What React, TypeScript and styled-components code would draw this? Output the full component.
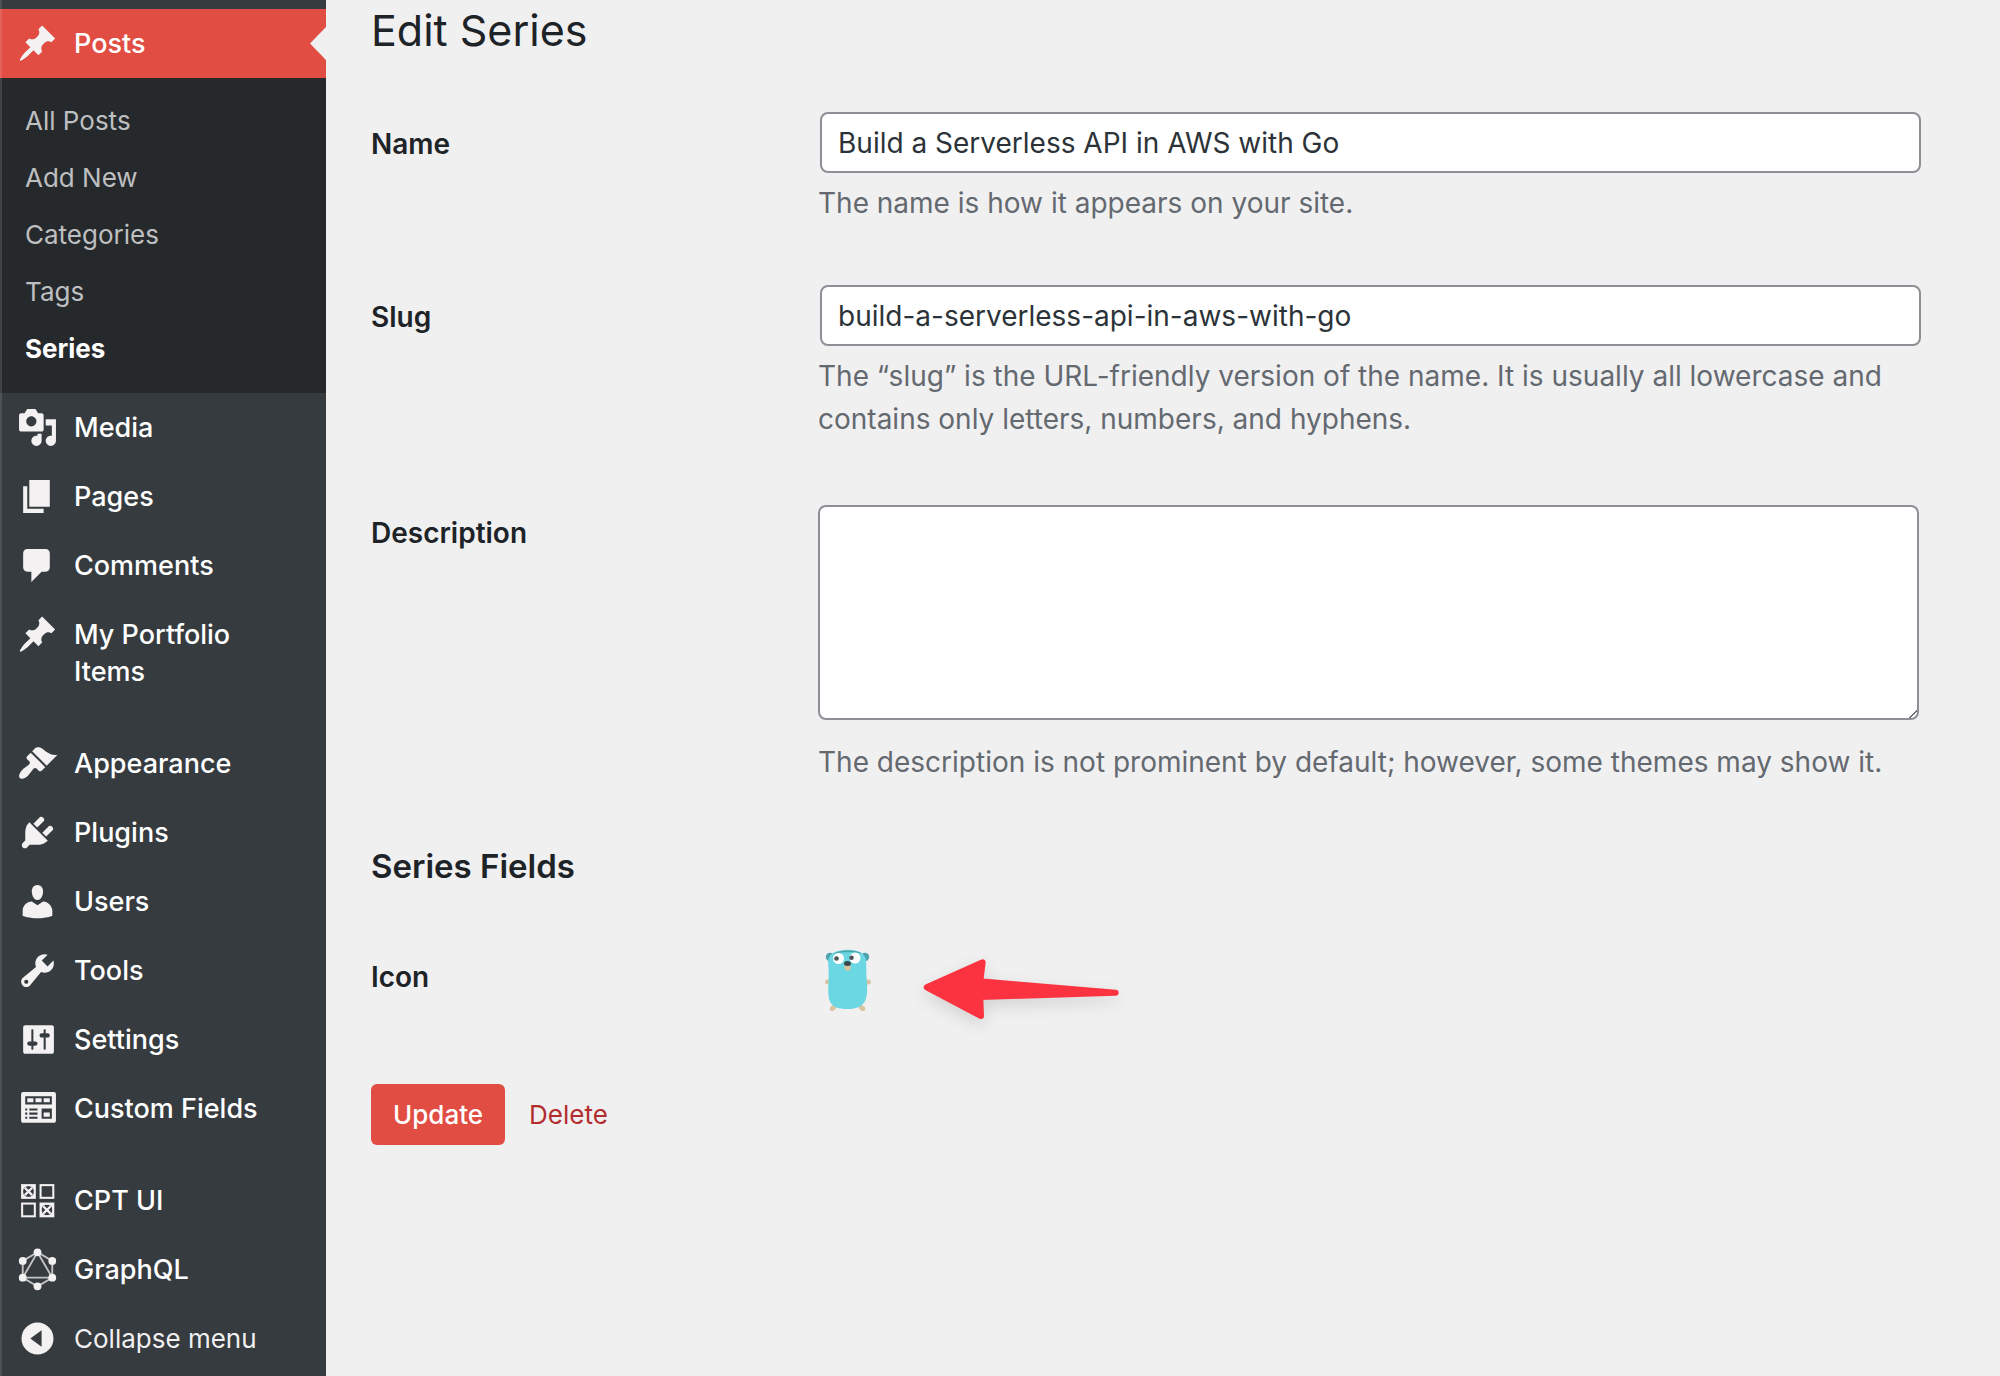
import React from "react";
import styled, { createGlobalStyle } from "styled-components";

const GlobalStyle = createGlobalStyle`
  *, *::before, *::after { box-sizing: border-box; }
  body {
    margin: 0;
    background: #f0f0f1;
    color: #1d2327;
    font-family: Inter, "Liberation Sans", sans-serif;
    font-size: 28px;
    line-height: 37px;
  }
`;

const Page = styled.div`
  display: grid;
  grid-template-columns: 326px minmax(0, 1fr);
  min-height: 100vh;
`;

const Sidebar = styled.nav`
  position: relative;
  padding-top: 9px;
  background: #363b3f;
  color: #fff;

  &::after {
    content: "";
    position: absolute;
    inset: 0 auto 0 0;
    width: 2px;
    background: rgba(255, 255, 255, 0.12);
    pointer-events: none;
  }
`;

const Menu = styled.ul<{ $spaced?: boolean }>`
  margin: ${(p) => (p.$spaced ? "23px 0 0" : "0")};
  padding: 0;
  list-style: none;
`;

const MenuLink = styled.a<{ $current?: boolean }>`
  position: relative;
  display: grid;
  grid-template-columns: 74px 1fr;
  width: 100%;
  padding: 16px 60px 16px 0;
  border: 0;
  background: ${(p) => (p.$current ? "#e14d43" : "transparent")};
  color: #fff;
  font: inherit;
  font-size: 27px;
  font-weight: 500;
  text-align: left;
  text-decoration: none;
  cursor: pointer;

  &::after {
    content: "";
    display: ${(p) => (p.$current ? "block" : "none")};
    position: absolute;
    right: 0;
    top: 18px;
    width: 16px;
    height: 33px;
    background: #f0f0f1;
    clip-path: polygon(100% 0, 100% 100%, 0 50%);
  }
`;

const CollapseButton = styled(MenuLink)`
  font-size: 26px;
  font-weight: 400;
  color: #f0f0f1;
`;

const IconSlot = styled.span`
  display: flex;
  align-items: center;
  justify-content: center;
  height: 37px;
`;

const Dashicon = styled.svg`
  display: block;
  flex: none;
  width: 41px;
  height: 41px;
  fill: #f3f1f1;
`;

const Submenu = styled.ul`
  margin: 0;
  padding: 14px 0 16px;
  background: #26292c;
  list-style: none;
`;

const SubmenuLink = styled.a<{ $current?: boolean }>`
  display: block;
  padding: 10px 25px;
  color: ${(p) => (p.$current ? "#fff" : "#bebfc0")};
  font-size: 26px;
  font-weight: ${(p) => (p.$current ? 700 : 400)};
  text-decoration: none;
`;

const Content = styled.main`
  padding: 0 79px 60px 45px;
`;

const Title = styled.h1`
  margin: 0 0 22px;
  font-size: 43px;
  font-weight: 400;
  line-height: 60px;
`;

const SectionTitle = styled.h2`
  margin: 28px 0 25px;
  font-size: 33px;
  font-weight: 600;
  line-height: 48px;
`;

const FieldRow = styled.div`
  display: grid;
  grid-template-columns: 447px minmax(0, 1fr);
  padding: 30px 0;
`;

const FieldLabel = styled.label`
  padding-top: 14px;
  font-weight: 600;
`;

const FieldBody = styled.div`
  display: flex;
  flex-direction: column;
`;

const TextInput = styled.input`
  height: 61px;
  margin-left: 2px;
  padding: 0 16px;
  border: 2px solid #8c8f94;
  border-radius: 8px;
  background: #fff;
  color: #2c3338;
  font: inherit;
`;

const TextArea = styled.textarea`
  height: 215px;
  margin: 4px 2px 12px 0;
  padding: 8px 16px;
  border: 2px solid #8c8f94;
  border-radius: 8px;
  background: #fff;
  color: #2c3338;
  font: inherit;
  resize: vertical;

  &::-webkit-scrollbar {
    width: 20px;
  }

  &::-webkit-resizer {
    background: linear-gradient(
        135deg,
        transparent 49%,
        #6b6e72 50% 54%,
        transparent 55% 77%,
        #6b6e72 78% 82%,
        transparent 83%
      )
      4px 4px / 14px 14px no-repeat;
  }
`;

const Help = styled.p`
  margin: 9px 0 0;
  color: #646970;
  line-height: 43px;
`;

const IconPreview = styled.div`
  display: flex;
  align-items: flex-start;
  gap: 47px;
  padding: 4px 0 0 7px;
`;

const Gopher = styled.svg`
  display: block;
  width: 48px;
  height: 62px;
`;

const Arrow = styled.svg`
  display: block;
  width: 202px;
  height: 74px;
  margin-top: 5px;
  overflow: visible;
  filter: drop-shadow(0 6px 8px rgba(0, 0, 0, 0.12));
`;

const Actions = styled.div`
  display: flex;
  align-items: center;
  gap: 24px;
  margin-top: 26px;
`;

const UpdateButton = styled.button`
  height: 61px;
  padding: 0 22px;
  border: 0;
  border-radius: 6px;
  background: #e14d43;
  color: #fff;
  font: inherit;
  font-size: 26px;
  font-weight: 500;
  cursor: pointer;
`;

const DeleteLink = styled.a`
  color: #b32d2e;
  font-size: 26px;
  text-decoration: none;
`;

const paths = {
  post: "M10.44 3.02l1.82-1.82 6.36 6.35-1.83 1.82c-1.05-.68-2.48-.57-3.41.36l-.75.75c-.92.93-1.04 2.35-.35 3.41l-1.83 1.82-2.41-2.41-2.8 2.79c-.42.42-3.38 2.71-3.8 2.29s1.86-3.39 2.28-3.81l2.79-2.79L4.1 9.36l1.83-1.82c1.05.69 2.48.57 3.4-.36l.75-.75c.93-.92 1.05-2.35.36-3.41z",
  media:
    "M13 11V4c0-.55-.45-1-1-1h-1.67L9 1H5L3.67 3H2c-.55 0-1 .45-1 1v7c0 .55.45 1 1 1h10c.55 0 1-.45 1-1zM7 4.5c1.38 0 2.5 1.12 2.5 2.5S8.38 9.5 7 9.5 4.5 8.38 4.5 7 5.62 4.5 7 4.5zM14 6h5v10.5c0 1.38-1.12 2.5-2.5 2.5S14 17.88 14 16.5s1.12-2.5 2.5-2.5c.17 0 .34.02.5.05V9h-3V6zm-4 8.05V13h2v3.5c0 1.38-1.12 2.5-2.5 2.5S7 17.88 7 16.5 8.12 14 9.5 14c.17 0 .34.02.5.05z",
  page: "M6 15V2h10v13H6zm-1 1h8v2H3V5h2v11z",
  comments: "M5 2h9c1.1 0 2 .9 2 2v7c0 1.1-.9 2-2 2h-2l-5 5v-5H5c-1.1 0-2-.9-2-2V4c0-1.1.9-2 2-2z",
  appearance:
    "M14.48 11.06L7.41 3.99l1.5-1.5c.5-.56 2.3-.47 3.51.32 1.21.8 1.43 1.28 2.91 2.1 1.18.64 2.45 1.26 4.45.85zm-.71.71L6.7 4.7 4.93 6.47c-.39.39-.39 1.02 0 1.41l1.06 1.06c.39.39.39 1.03 0 1.42-.6.6-1.43 1.11-2.21 1.69-.35.26-.7.53-1.01.84C1.43 14.23.4 16.08 1.4 17.07c.99 1 2.84-.03 4.18-1.36.31-.31.58-.66.85-1.02.57-.78 1.08-1.61 1.69-2.21.39-.39 1.02-.39 1.41 0l1.06 1.06c.39.39 1.02.39 1.41 0z",
  plugins:
    "M13.11 4.36L9.87 7.6 8 5.73l3.24-3.24c.35-.34 1.05-.2 1.56.32.52.51.66 1.21.31 1.55zm-8 1.77l.91-1.12 9.01 9.01-1.19.84c-.71.71-2.63 1.16-3.82 1.16H6.14L4.9 17.26c-.59.59-1.54.59-2.12 0-.59-.58-.59-1.53 0-2.12l1.24-1.24v-3.88c0-1.13.4-3.19 1.09-3.89zm7.26 3.97l3.24-3.24c.34-.35 1.04-.21 1.55.31.52.51.66 1.21.31 1.55l-3.24 3.25z",
  users:
    "M10 9.25c-2.27 0-2.73-3.44-2.73-3.44C7 4.02 7.82 2 9.97 2c2.16 0 2.98 2.02 2.71 3.81 0 0-.41 3.44-2.68 3.44zm0 2.57L12.72 10c2.39 0 4.52 2.33 4.52 4.53v2.49s-3.65 1.13-7.24 1.13c-3.65 0-7.24-1.13-7.24-1.13v-2.49c0-2.25 1.94-4.48 4.47-4.48z",
  tools:
    "M16.68 9.77c-1.34 1.34-3.3 1.67-4.95.99l-5.41 6.52c-.99.99-2.59.99-3.58 0s-.99-2.59 0-3.57l6.52-5.42c-.68-1.65-.35-3.61.99-4.95 1.28-1.28 3.12-1.62 4.72-1.06l-2.89 2.89 2.82 2.82 2.86-2.87c.53 1.58.18 3.39-1.08 4.65zM3.81 16.21c.4.39 1.04.39 1.43 0 .4-.4.4-1.04 0-1.43-.39-.4-1.03-.4-1.43 0-.39.39-.39 1.03 0 1.43z",
  settings:
    "M18 16V4c0-.55-.45-1-1-1H4c-.55 0-1 .45-1 1v12c0 .55.45 1 1 1h13c.55 0 1-.45 1-1zM8 11h1c.55 0 1 .45 1 1s-.45 1-1 1H8v1.5c0 .28-.22.5-.5.5s-.5-.22-.5-.5V13H6c-.55 0-1-.45-1-1s.45-1 1-1h1V5.5c0-.28.22-.5.5-.5s.5.22.5.5V11zm5-2h-1c-.55 0-1-.45-1-1s.45-1 1-1h1V5.5c0-.28.22-.5.5-.5s.5.22.5.5V7h1c.55 0 1 .45 1 1s-.45 1-1 1h-1v5.5c0 .28-.22.5-.5.5s-.5-.22-.5-.5V9z",
  fields:
    "M19 16V3c0-.55-.45-1-1-1H3c-.55 0-1 .45-1 1v13c0 .55.45 1 1 1h15c.55 0 1-.45 1-1zM4 4h13v4H4V4zm1 1v2h3V5H5zm4 0v2h3V5H9zm4 0v2h3V5h-3zM4 10h1v1H4zM6 10h4v1H6zM12 10h5v5h-5v-5zM4 12h1v1H4zM6 12h4v1H6zM13 12v2h3v-2zM4 14h1v1H4zM6 14h4v1H6z",
  collapse: "M10 2.2a7.8 7.8 0 1 0 0 15.6a7.8 7.8 0 0 0 0-15.6zM12 6v8l-5.5-4z",
};

type IconName = keyof typeof paths | "cpt" | "graphql";

const hexagon: [number, number][] = [
  [10, 1.6], [17.2, 5.8], [17.2, 14], [10, 18.2], [2.8, 14], [2.8, 5.8],
];

function Icon({ name }: { name: IconName }) {
  if (name === "cpt") {
    const cells = [
      { x: 2, y: 2, crossed: true },
      { x: 11, y: 2, crossed: false },
      { x: 2, y: 11, crossed: false },
      { x: 11, y: 11, crossed: true },
    ];
    return (
      <Dashicon viewBox="0 0 20 20" aria-hidden="true">
        {cells.map(({ x, y, crossed }) => (
          <g key={`${x}-${y}`} fill="none" stroke="#f3f1f1">
            <rect x={x + 0.5} y={y + 0.5} width="6.2" height="6.2" />
            {crossed && (
              <>
                <path
                  d={`M${x + 0.5} ${y + 0.5}h6.2v6.2h-6.2zM${x + 3.6} ${y + 0.9}a2.7 2.7 0 1 0 0 5.4a2.7 2.7 0 0 0 0-5.4z`}
                  fill="#f3f1f1"
                  fillRule="evenodd"
                  stroke="none"
                />
                <path d={`M${x + 1.8} ${y + 1.8}l3.6 3.6m0-3.6l-3.6 3.6`} strokeWidth="1.1" />
              </>
            )}
          </g>
        ))}
      </Dashicon>
    );
  }
  if (name === "graphql") {
    return (
      <Dashicon viewBox="0 0 20 20" overflow="visible" aria-hidden="true">
        <path
          d="M10 1.6L17.2 5.8V14L10 18.2L2.8 14V5.8ZM10 1.6L17.2 14H2.8Z"
          fill="none"
          stroke="#f3f1f1"
          strokeOpacity="0.75"
          strokeWidth="0.9"
        />
        {hexagon.map(([x, y]) => (
          <circle key={`${x}-${y}`} cx={x} cy={y} r="1.9" />
        ))}
      </Dashicon>
    );
  }
  return (
    <Dashicon viewBox="0 0 20 20" aria-hidden="true">
      <path fillRule="evenodd" d={paths[name]} />
    </Dashicon>
  );
}

const submenu = ["All Posts", "Add New", "Categories", "Tags", "Series"];

const groups: { label: string; icon: IconName }[][] = [
  [
    { label: "Posts", icon: "post" },
    { label: "Media", icon: "media" },
    { label: "Pages", icon: "page" },
    { label: "Comments", icon: "comments" },
    { label: "My Portfolio Items", icon: "post" },
  ],
  [
    { label: "Appearance", icon: "appearance" },
    { label: "Plugins", icon: "plugins" },
    { label: "Users", icon: "users" },
    { label: "Tools", icon: "tools" },
    { label: "Settings", icon: "settings" },
    { label: "Custom Fields", icon: "fields" },
  ],
  [
    { label: "CPT UI", icon: "cpt" },
    { label: "GraphQL", icon: "graphql" },
  ],
];

function AdminMenu() {
  return (
    <Sidebar aria-label="Main menu">
      {groups.map((items, index) => (
        <Menu key={index} $spaced={index > 0}>
          {items.map(({ label, icon }) => {
            const current = label === "Posts";
            return (
              <li key={label}>
                <MenuLink href="#" $current={current}>
                  <IconSlot><Icon name={icon} /></IconSlot>
                  <span>{label}</span>
                </MenuLink>
                {current && (
                  <Submenu>
                    {submenu.map((entry) => (
                      <li key={entry}>
                        <SubmenuLink href="#" $current={entry === "Series"}>{entry}</SubmenuLink>
                      </li>
                    ))}
                  </Submenu>
                )}
              </li>
            );
          })}
        </Menu>
      ))}
      <CollapseButton as="button" type="button">
        <IconSlot><Icon name="collapse" /></IconSlot>
        <span>Collapse menu</span>
      </CollapseButton>
    </Sidebar>
  );
}

function GopherImage() {
  return (
    <Gopher viewBox="0 0 48 62" role="img" aria-label="Go gopher">
      <g fill="#d9c3a0">
        <ellipse cx="3" cy="33" rx="3" ry="2.5" />
        <ellipse cx="43" cy="33" rx="3" ry="2.5" />
        <ellipse cx="8" cy="59" rx="3.5" ry="2.5" transform="rotate(-35 8 59)" />
        <ellipse cx="37" cy="59" rx="3.5" ry="2.5" transform="rotate(35 37 59)" />
      </g>
      <g fill="#4fa3ad">
        <circle cx="5" cy="8" r="4.2" />
        <circle cx="40" cy="8" r="4.2" />
      </g>
      <path
        d="M3 12C4 4 12 .8 22.5 .8S40 4 41 11C41.5 20 41 26 42 34C43 50 41 60 22.5 60S2.5 52 3.5 34C4 26 3.5 18 3 12z"
        fill="#6ad7e2"
      />
      <path d="M8 5C13 .4 32 .2 37 4.5C30 2.8 15 2.8 8 5z" fill="#4fa3ad" />
      <circle cx="13.5" cy="9.5" r="5.5" fill="#fff" />
      <circle cx="30" cy="9" r="5.5" fill="#fff" />
      <circle cx="11.5" cy="9.5" r="2.3" fill="#4a5358" />
      <circle cx="26.5" cy="8.8" r="2.3" fill="#4a5358" />
      <path d="M19 16.5h7l-1 5h-4.5z" fill="#d9c3a0" />
      <ellipse cx="22.5" cy="14.5" rx="3.5" ry="2.5" fill="#3b474b" />
    </Gopher>
  );
}

export default function App() {
  return (
    <>
      <GlobalStyle />
      <Page>
        <AdminMenu />
        <Content>
          <Title>Edit Series</Title>
          <form onSubmit={(event) => event.preventDefault()}>
            <FieldRow>
              <FieldLabel htmlFor="name">Name</FieldLabel>
              <FieldBody>
                <TextInput id="name" type="text" defaultValue="Build a Serverless API in AWS with Go" />
                <Help>The name is how it appears on your site.</Help>
              </FieldBody>
            </FieldRow>
            <FieldRow>
              <FieldLabel htmlFor="slug">Slug</FieldLabel>
              <FieldBody>
                <TextInput id="slug" type="text" defaultValue="build-a-serverless-api-in-aws-with-go" />
                <Help>
                  The “slug” is the URL-friendly version of the name. It is usually all lowercase and
                  contains only letters, numbers, and hyphens.
                </Help>
              </FieldBody>
            </FieldRow>
            <FieldRow>
              <FieldLabel htmlFor="description">Description</FieldLabel>
              <FieldBody>
                <TextArea id="description" />
                <Help>The description is not prominent by default; however, some themes may show it.</Help>
              </FieldBody>
            </FieldRow>
            <SectionTitle>Series Fields</SectionTitle>
            <FieldRow>
              <FieldLabel as="span">Icon</FieldLabel>
              <IconPreview>
                <GopherImage />
                <Arrow viewBox="360 102 606 222" aria-hidden="true">
                  <path
                    d="M380 202L548 127L541 184L947 218.5L541 231L543 288Z"
                    fill="#fb3340"
                    stroke="#fb3340"
                    strokeWidth="18"
                    strokeLinejoin="round"
                  />
                </Arrow>
              </IconPreview>
            </FieldRow>
            <Actions>
              <UpdateButton type="submit">Update</UpdateButton>
              <DeleteLink href="#">Delete</DeleteLink>
            </Actions>
          </form>
        </Content>
      </Page>
    </>
  );
}
